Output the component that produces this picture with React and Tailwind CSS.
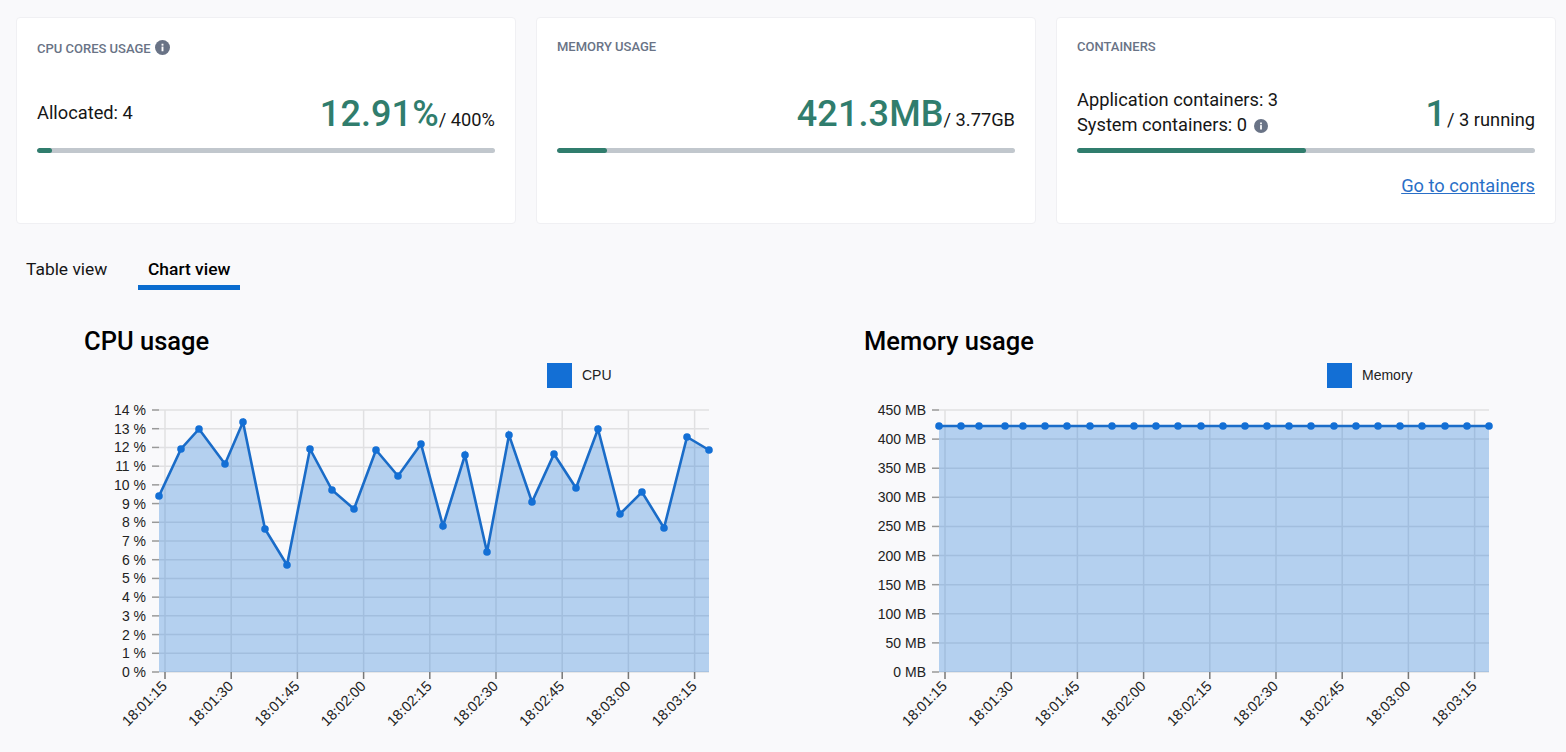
import React from "react";

const cpuPoints = [
  [159, 496], [181, 449], [199, 429], [225, 464], [243, 422], [265, 529], [287, 565], [310, 449],
  [332, 490], [354, 509], [376, 450], [398, 476], [421, 444], [443, 526], [465, 455], [487, 552],
  [509, 435], [532, 502], [554, 454], [576, 488], [598, 429], [620, 514], [642, 492], [664, 528],
  [687, 437], [709, 450],
];

const memXs = [
  939, 961, 979, 1005, 1023, 1045, 1067, 1090, 1112, 1134, 1156, 1178, 1201, 1223, 1245, 1267,
  1289, 1311, 1334, 1356, 1378, 1400, 1422, 1445, 1467, 1489,
];
const memPoints = memXs.map((x) => [x, 426]);

const times = [
  "18:01:15", "18:01:30", "18:01:45", "18:02:00", "18:02:15",
  "18:02:30", "18:02:45", "18:03:00", "18:03:15",
];

const cpuTicks = Array.from({ length: 15 }, (_, i) => `${i} %`);
const memTicks = Array.from({ length: 10 }, (_, i) => `${i * 50} MB`);

const InfoIcon = ({ className }) => (
  <svg viewBox="0 0 16 16" className={className}>
    <circle cx="8" cy="8" r="8" fill="#697386" />
    <rect x="7" y="7" width="2" height="5" fill="#fff" />
    <rect x="7" y="4" width="2" height="2" fill="#fff" />
  </svg>
);

const Progress = ({ value }) => (
  <div className="h-[5px] rounded-full bg-[#c1c7cd] overflow-hidden">
    <div className="h-full rounded-full bg-[#307d6d]" style={{ width: `${value}%` }} />
  </div>
);

const Card = ({ title, icon, left, big, rest, value, children }) => (
  <div className="h-[207px] bg-white rounded border border-[#f0f0f3] px-5 pt-[21px]">
    <div className="h-4 flex items-center gap-1 text-[13px] font-medium text-[#697386] uppercase">
      {icon ? <span className="mt-[4px]">{title}</span> : title}
      {icon && <InfoIcon className="w-[15px] h-[15px]" />}
    </div>
    <div className="h-[50px] mt-[33px] mb-[10px] flex items-center justify-between">
      <div className="text-[18.25px] leading-[25px] text-[#161616] -mt-[2px]">{left}</div>
      <div className="text-[#161616] text-[18.25px] leading-[50px] pt-[8px]">
        <span className="text-[36px] font-medium tracking-[0.1px] text-[#307d6d]">{big}</span>
        {rest}
      </div>
    </div>
    <Progress value={value} />
    {children}
  </div>
);

const Chart = ({ title, legend, points, ticks, tickX, left, offset, firstTick }) => {
  const right = left + 550;
  const step = 262 / (ticks.length - 1);
  const line = points.map((p) => p.join(",")).join(" ");
  const area = `${points[0][0]},672 ${line} ${points[points.length - 1][0]},672`;
  return (
    <div>
      <h2 className="text-[25.5px] font-medium text-black ml-[68px] h-[35px] leading-8">{title}</h2>
      <svg viewBox={`${offset} 360 770 392`} className="block w-[770px] h-[392px]">
        <rect x={left + 388} y="363" width="25" height="25" fill="#136fd5" />
        <text x={left + 423} y="380" fontSize="14" fill="#222" fontFamily="Liberation Sans, sans-serif">
          {legend}
        </text>
        {ticks.map((t, i) => {
          const y = 672 - i * step;
          return (
            <g key={t}>
              <line x1={tickX + 6} x2={left} y1={y} y2={y} stroke="#999" strokeWidth="1.5" />
              <line x1={left} x2={right} y1={y} y2={y} stroke="#e0e0e2" strokeWidth="1.5" />
              <text x={tickX} y={y + 5} textAnchor="end" fontSize="14" fill="#222" fontFamily="Liberation Sans, sans-serif">
                {t}
              </text>
            </g>
          );
        })}
        {times.map((t, i) => {
          const x = firstTick + i * 66.2;
          return (
            <g key={t}>
              <line x1={x} x2={x} y1="410" y2="672" stroke="#e0e0e2" strokeWidth="1.5" />
              <line x1={x} x2={x} y1="672" y2="679" stroke="#777" strokeWidth="1.5" />
              <text
                x={x + 3}
                y="687"
                textAnchor="end"
                fontSize="14.5"
                fill="#222"
                fontFamily="Liberation Sans, sans-serif"
                transform={`rotate(-45 ${x + 3} 687)`}
              >
                {t}
              </text>
            </g>
          );
        })}
        <polygon points={area} fill="#136fd5" fillOpacity="0.3" />
        <polyline points={line} fill="none" stroke="#1a6cc8" strokeWidth="2.6" />
        {points.map((p, i) => (
          <circle key={i} cx={p[0]} cy={p[1]} r="3.8" fill="#136fd5" />
        ))}
      </svg>
    </div>
  );
};

export default function App() {
  return (
    <div className="h-[752px] overflow-hidden bg-[#f9f9fb] font-['Roboto',sans-serif] text-[#161616]">
      {/* Summary cards */}
      <div className="grid grid-cols-3 gap-5 pl-4 pr-[10px] pt-[17px]">
        <Card
          title="CPU cores usage"
          icon
          left="Allocated: 4"
          big="12.91%"
          rest="/ 400%"
          value={3.2}
        />
        <Card title="Memory usage" big="421.3MB" rest="/ 3.77GB" value={11} />
        <Card
          title="Containers"
          left={
            <>
              <div>Application containers: 3</div>
              <div className="flex items-center gap-[7px]">
                System containers: 0 <InfoIcon className="w-[14px] h-[14px] mt-[2px]" />
              </div>
            </>
          }
          big="1"
          rest={<span className="ml-[1px]">/ 3 running</span>}
          value={50}
        >
          <div className="mt-[19px] text-right">
            <a href="#" className="text-[18.25px] text-[#2a6fc7] underline">
              Go to containers
            </a>
          </div>
        </Card>
      </div>

      {/* Tabs */}
      <div className="flex gap-5 pl-4 mt-[30px] text-[17.4px]">
        <div className="w-[102px] px-[10px] h-9 leading-[31px]">Table view</div>
        <div className="w-[102px] px-[10px] h-9 leading-[31px] font-medium text-black border-b-[5px] border-[#0a6ccf] whitespace-nowrap">
          Chart view
        </div>
      </div>

      {/* Charts */}
      <div className="grid grid-cols-[780px_770px] pl-4 mt-[35px]">
        <Chart
          title="CPU usage"
          legend="CPU"
          points={cpuPoints}
          ticks={cpuTicks}
          tickX={146}
          left={159}
          offset={16}
          firstTick={165}
        />
        <Chart
          title="Memory usage"
          legend="Memory"
          points={memPoints}
          ticks={memTicks}
          tickX={926}
          left={939}
          offset={796}
          firstTick={945}
        />
      </div>
    </div>
  );
}
